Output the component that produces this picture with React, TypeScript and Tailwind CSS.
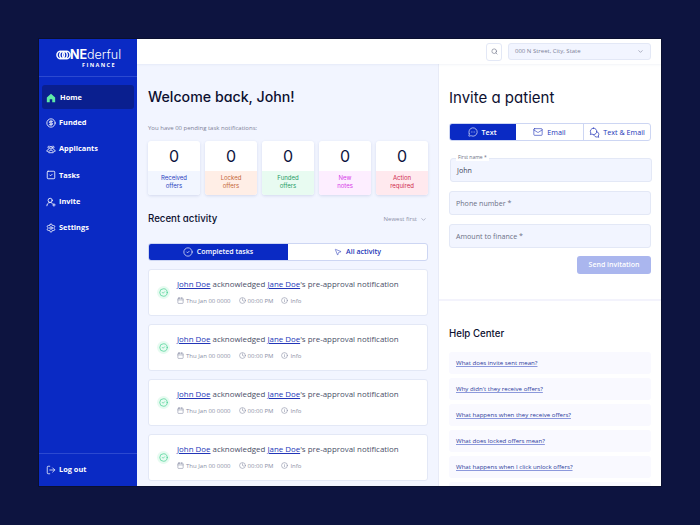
import React from "react";
import { ChevronDown, Search, CircleDollarSign, SquareCheck, UserRoundPlus, Settings, LogOut, CircleCheck, MousePointer2, Calendar, Clock, Info, MessageCircleMore, Mail } from "lucide-react";

const body = "font-['Open_Sans','Noto_Sans',sans-serif]";
const head = "font-['Inter',sans-serif] [font-feature-settings:'cv11']";

function Home() {
  return (
    <svg width="10" height="10" viewBox="0 0 24 24" fill="#5eeaa8">
      <path d="M12 2 2 10.5V22h7v-7h6v7h7V10.5z" />
    </svg>
  );
}

function Applicants({ size }: { size: number }) {
  return (
    <svg width={size} height={size} viewBox="0 0 24 24" fill="none" stroke="currentColor" strokeWidth="1.9" strokeLinecap="round" strokeLinejoin="round">
      <circle cx="12" cy="9" r="3.2" />
      <path d="M6.5 20c0-3.2 2.4-5 5.5-5s5.500 1.800 5.500 5z" />
      <path d="M7.500 10.500a2.700 2.700 0 1 1 .5-5.300" />
      <path d="M16.500 10.500a2.700 2.700 0 1 0-.5-5.300" />
      <path d="M4.500 17.500H2c0-2.800 1.500-4.300 3.800-4.700" />
      <path d="M19.500 17.500H22c0-2.800-1.500-4.300-3.800-4.700" />
    </svg>
  );
}

function TwoBubbles({ size }: { size: number }) {
  return (
    <svg width={size} height={size} viewBox="0 0 24 24" fill="none" stroke="currentColor" strokeWidth="1.6" strokeLinecap="round" strokeLinejoin="round">
      <path d="M10 2.500a7 7 0 0 0-6 10.600L3 16.500l3.400-1A7 7 0 1 0 10 2.500z" />
      <path d="M16.500 10a6 6 0 0 1 3.800 9.600l.9 2.900-2.900-.9A6 6 0 0 1 10.500 17" />
    </svg>
  );
}

const nav = [
  { label: "Funded", Icon: CircleDollarSign },
  { label: "Applicants", Icon: Applicants },
  { label: "Tasks", Icon: SquareCheck },
  { label: "Invite", Icon: UserRoundPlus },
  { label: "Settings", Icon: Settings },
];

function Sidebar() {
  return (
    <aside className="w-[98px] shrink-0 bg-[#0a2ac4] flex flex-col text-white">
      <div className="h-[38px] pt-[1px] border-b border-[#2c49d0] flex flex-col items-center justify-center">
        <div className={`flex items-center text-[12.5px] leading-[12px] pl-[1px] ${head}`}>
          <svg width="15" height="10" viewBox="0 0 16 10" fill="none" stroke="white" strokeWidth="1.6" className="mr-[-1px]">
            <circle cx="5" cy="5" r="4" />
            <circle cx="8" cy="5" r="4" />
            <circle cx="11" cy="5" r="4" />
          </svg>
          <span className="font-bold">NE</span>
          <span className="font-light">derful</span>
        </div>
        <div className={`text-[5.5px] leading-[6px] mt-[1px] font-bold tracking-[1.4px] ml-[22px] ${body}`}>FINANCE</div>
      </div>
      <nav className={`flex flex-col px-[3px] pt-[8px] text-[7.4px] font-bold ${body}`}>
        <div className="h-[24px] pt-[1px] bg-[#0a1f8f] rounded-[3px] flex items-center gap-[4px] pl-[4px]">
          <Home />
          <span>Home</span>
        </div>
        {nav.map(({ label, Icon }) => (
          <div key={label} className="h-[26.3px] flex items-center gap-[3px] pl-[4px] first:mt-[2px] pt-[1px]">
            <Icon size={10} />
            <span>{label}</span>
          </div>
        ))}
      </nav>
      <div className={`mt-auto h-[33px] border-t border-[#2c49d0] flex items-center gap-[3px] pl-[7px] text-[7.4px] font-bold ${body}`}>
        <LogOut size={10} strokeWidth={1.8} />
        <span>Log out</span>
      </div>
    </aside>
  );
}

const stats = [
  { a: "Received", b: "offers", bg: "bg-[#f2f6ff]", fg: "text-[#2a3fc0]" },
  { a: "Locked", b: "offers", bg: "bg-[#ffeee6]", fg: "text-[#c4663a]" },
  { a: "Funded", b: "offers", bg: "bg-[#e8fbf1]", fg: "text-[#1f9c66]" },
  { a: "New", b: "notes", bg: "bg-[#fdeeff]", fg: "text-[#d63be8]" },
  { a: "Action", b: "required", bg: "bg-[#ffe9ee]", fg: "text-[#cf2b4d]" },
];

function Stat({ a, b, bg, fg }: { a: string; b: string; bg: string; fg: string }) {
  return (
    <div className="flex-1 h-[54px] rounded-[3px] overflow-hidden bg-white shadow-[0_1px_3px_rgba(40,60,140,0.15)] flex flex-col">
      <div className={`h-[30px] flex items-center justify-center text-[16px] text-[#0d1440] ${head}`}>0</div>
      <div className={`flex-1 ${bg} ${fg} text-center text-[6px] leading-[8px] pt-[3px] ${head}`}>
        <div>{a}</div>
        <div>{b}</div>
      </div>
    </div>
  );
}

function Activity() {
  return (
    <div className="h-[47px] shrink-0 bg-white rounded-[3px] border border-[#e3e8f6] flex items-center pl-[8px] pb-[2px]">
      <div className="w-[13px] h-[13px] mt-[2px] rounded-full bg-[#e7fbf1] flex items-center justify-center shrink-0">
        <CircleCheck size={9} className="text-[#3fd08e]" strokeWidth={1.8} />
      </div>
      <div className={`ml-[7px] ${body}`}>
        <div className="text-[7.9px] leading-[11px] text-[#4a4f68] whitespace-nowrap">
          <span className="text-[#2336b8] underline">John Doe</span> acknowledged <span className="text-[#2336b8] underline">Jane Doe</span>'s pre-approval notification
        </div>
        <div className="flex items-center gap-[8px] mt-[7px] text-[6px] leading-[8px] text-[#8a8fa6]">
          <span className="flex items-center gap-[2px]"><Calendar size={7} />Thu Jan 00 0000</span>
          <span className="flex items-center gap-[2px]"><Clock size={7} />00:00 PM</span>
          <span className="flex items-center gap-[2px]"><Info size={7} />Info</span>
        </div>
      </div>
    </div>
  );
}

function Main() {
  return (
    <main className="w-[302px] shrink-0 bg-[#f2f5ff] border-r border-[#e8ebf7] pl-[11px] pr-[10px] overflow-hidden">
      <h1 className={`mt-[23px] text-[14.2px] leading-[20px] font-medium text-[#0d1030] ${head}`}>Welcome back, John!</h1>
      <p className={`mt-[17px] text-[6px] leading-[8px] text-[#7d8198] ${body}`}>You have 00 pending task notifications:</p>
      <div className="flex gap-[5px] mt-[9px]">
        {stats.map((s) => <Stat key={s.a} {...s} />)}
      </div>
      <div className="flex items-center justify-between mt-[17px]">
        <h2 className={`text-[9.7px] leading-[14px] font-medium text-[#0d1030] ${head}`}>Recent activity</h2>
        <div className={`flex items-center gap-[3px] text-[6px] text-[#8a8fa6] mr-[1px] ${body}`}>Newest first <ChevronDown size={7} /></div>
      </div>
      <div className={`flex h-[18px] mt-[17px] rounded-[3px] overflow-hidden border border-[#cdd6f3] bg-white text-[7px] font-semibold ${body}`}>
        <div className="w-[140px] -my-px -ml-px bg-[#0a2ac4] text-white flex items-center justify-center gap-[4px]">
          <CircleCheck size={10} strokeWidth={1.6} />Completed tasks
        </div>
        <div className="flex-1 text-[#2336b8] flex items-center justify-center gap-[4px]">
          <MousePointer2 size={8} strokeWidth={1.6} />All activity
        </div>
      </div>
      <div className="flex flex-col gap-[8px] mt-[8px]">
        <Activity /><Activity /><Activity /><Activity />
      </div>
    </main>
  );
}

function Field({ label, dark }: { label: string; dark?: boolean }) {
  return (
    <div className={`h-[24px] rounded-[3px] bg-[#f2f5ff] border border-[#e3e8f6] flex items-center pl-[6px] text-[7.1px] ${dark ? "text-[#3c4158]" : "text-[#6b7085]"} ${body}`}>{label}</div>
  );
}

const help = [
  "What does invite sent mean?",
  "Why didn't they receive offers?",
  "What happens when they receive offers?",
  "What does locked offers mean?",
  "What happens when I click unlock offers?",
  "",
];

function Right() {
  return (
    <section className="flex-1 bg-white flex flex-col overflow-hidden">
      <div className="px-[10px] h-[237px] shrink-0 border-b-2 border-[#f3f3fc]">
        <h1 className={`mt-[24px] text-[15px] leading-[20px] font-normal text-[#0d1030] ${head}`}>Invite a patient</h1>
        <div className={`flex mt-[15px] h-[18px] rounded-[3px] border border-[#cdd6f3] overflow-hidden text-[7.2px] ${body}`}>
          <div className="w-[67px] -my-px -ml-px bg-[#0a2ac4] text-white font-semibold flex items-center justify-center gap-[3px]">
            <MessageCircleMore size={10} strokeWidth={1.5} />Text
          </div>
          <div className="w-[68px] border-r border-[#cdd6f3] text-[#2336b8] flex items-center justify-center gap-[4px]">
            <Mail size={10} strokeWidth={1.5} />Email
          </div>
          <div className="flex-1 text-[#2336b8] flex items-center justify-center gap-[3px]">
            <TwoBubbles size={11} />Text &amp; Email
          </div>
        </div>
        <div className="relative mt-[17px] ml-[1px] mr-[-1px]">
          <span className={`absolute left-[6px] top-[-4px] px-[2px] bg-white text-[5px] leading-[7px] text-[#6b7085] ${body}`}>First name *</span>
          <Field label="John" dark />
        </div>
        <div className="flex flex-col gap-[9px] mt-[9px]">
          <Field label="Phone number *" />
          <Field label="Amount to finance *" />
        </div>
        <div className="flex justify-end mt-[8px]">
          <div className={`w-[74px] h-[18px] rounded-[3px] bg-[#aab6ee] text-white text-[7px] font-semibold flex items-center justify-center ${body}`}>Send invitation</div>
        </div>
      </div>
      <div className="px-[10px]">
        <h2 className={`mt-[26px] text-[9.7px] leading-[14px] font-medium text-[#0d1030] ${head}`}>Help Center</h2>
        <div className="flex flex-col gap-[4px] mt-[11px]">
          {help.map((q, i) => (
            <div key={i} className={`h-[22px] shrink-0 rounded-[3px] bg-[#f9f9ff] flex items-center pl-[7px] text-[6.1px] text-[#2a3a9c] underline decoration-[#8c99dc] ${body}`}>{q}</div>
          ))}
        </div>
      </div>
    </section>
  );
}

export default function App() {
  return (
    <div className="w-[700px] h-[525px] bg-[#0d1440] pt-[39px] pl-[39px] overflow-hidden">
      <div className="w-[622px] h-[447px] flex overflow-hidden shadow-[0_0_0_1px_#0a1030]">
        <Sidebar />
        <div className="flex-1 min-w-0 flex flex-col">
          <header className={`h-[25px] shrink-0 bg-white flex items-center justify-end gap-[6px] pr-[10px] shadow-[0_1px_2px_rgba(40,60,140,0.06)] relative ${body}`}>
            <div className="w-[16px] h-[18px] rounded-[3px] border border-[#e3e8f6] flex items-center justify-center">
              <Search size={7} className="text-[#6b7085]" />
            </div>
            <div className="w-[143px] h-[17px] rounded-[3px] bg-[#f2f5ff] border border-[#e3e8f6] flex items-center justify-between pl-[6px] pr-[6px] text-[6px] text-[#7d8198]">
              000 N Street, City, State
              <ChevronDown size={7} />
            </div>
          </header>
          <div className="flex flex-1 min-h-0">
            <Main />
            <Right />
          </div>
        </div>
      </div>
    </div>
  );
}
